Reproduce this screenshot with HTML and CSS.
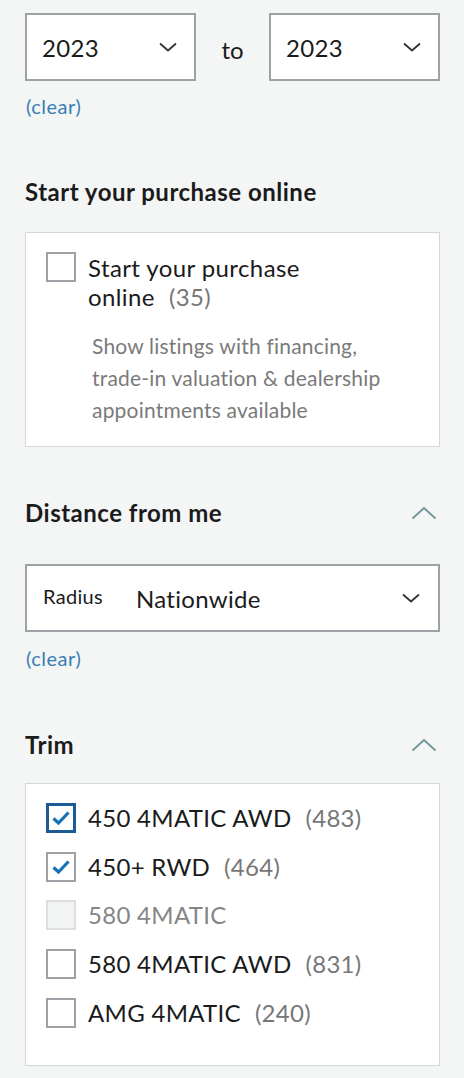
FILE: index.html
```html
<!DOCTYPE html>
<html>
<head>
<meta charset="utf-8">
<link rel="stylesheet" href="styles.css">
</head>
<body>
<div class="panel">
  <div class="year-row">
    <div class="select year">
      <span class="value">2023</span>
      <svg class="chev" width="18" height="10" viewBox="0 0 18 10"><path d="M1 1.5 L9 8.5 L17 1.5" fill="none" stroke="#333" stroke-width="1.8"/></svg>
    </div>
    <span class="to">to</span>
    <div class="select year">
      <span class="value">2023</span>
      <svg class="chev" width="18" height="10" viewBox="0 0 18 10"><path d="M1 1.5 L9 8.5 L17 1.5" fill="none" stroke="#333" stroke-width="1.8"/></svg>
    </div>
  </div>
  <a class="clear clear-first">(clear)</a>

  <h2 class="heading h-purchase">Start your purchase online</h2>
  <div class="card card-purchase">
    <div class="check-row">
      <span class="box"></span>
      <div class="label">
        <div class="line">Start your purchase</div>
        <div class="line">online<span class="count">(35)</span></div>
      </div>
    </div>
    <p class="desc">Show listings with financing, trade-in valuation &amp; dealership appointments available</p>
  </div>

  <div class="heading-row h-distance">
    <h2 class="heading">Distance from me</h2>
    <svg class="up" width="26" height="14" viewBox="0 0 26 14"><path d="M1.5 12.5 L13 2 L24.5 12.5" fill="none" stroke="#6e969b" stroke-width="1.8"/></svg>
  </div>
  <div class="select radius">
    <span class="radius-label">Radius</span>
    <span class="value nation">Nationwide</span>
    <svg class="chev" width="18" height="10" viewBox="0 0 18 10"><path d="M1 1.5 L9 8.5 L17 1.5" fill="none" stroke="#333" stroke-width="1.8"/></svg>
  </div>
  <a class="clear clear-second">(clear)</a>

  <div class="heading-row h-trim">
    <h2 class="heading">Trim</h2>
    <svg class="up" width="26" height="14" viewBox="0 0 26 14"><path d="M1.5 12.5 L13 2 L24.5 12.5" fill="none" stroke="#6e969b" stroke-width="1.8"/></svg>
  </div>
  <div class="card card-trim">
    <div class="trim-row">
      <span class="box checked strong"><svg width="20" height="16" viewBox="0 0 20 16"><path d="M2.5 8.5 L7.5 13 L17.5 2.5" fill="none" stroke="#1672b5" stroke-width="3.2"/></svg></span>
      <span class="label">450 4MATIC AWD<span class="count">(483)</span></span>
    </div>
    <div class="trim-row">
      <span class="box checked"><svg width="20" height="16" viewBox="0 0 20 16"><path d="M2.5 8.5 L7.5 13 L17.5 2.5" fill="none" stroke="#1672b5" stroke-width="3.2"/></svg></span>
      <span class="label">450+ RWD<span class="count">(464)</span></span>
    </div>
    <div class="trim-row disabled">
      <span class="box"></span>
      <span class="label">580 4MATIC</span>
    </div>
    <div class="trim-row">
      <span class="box"></span>
      <span class="label">580 4MATIC AWD<span class="count">(831)</span></span>
    </div>
    <div class="trim-row">
      <span class="box"></span>
      <span class="label">AMG 4MATIC<span class="count">(240)</span></span>
    </div>
  </div>
</div>
</body>
</html>
```
FILE: styles.css
```css
html, body {
  margin: 0;
  padding: 0;
  background: #f4f5f5;
}
body {
  font-family: Lato, "Noto Sans", sans-serif;
  color: #1b1b1b;
}
.panel {
  padding: 13px 24px 0 25px;
  display: flex;
  flex-direction: column;
}
.year-row {
  display: flex;
  align-items: center;
  height: 68px;
}
.select {
  box-sizing: border-box;
  height: 68px;
  background: #fff;
  border: 2px solid #9ea2a7;
  display: flex;
  align-items: center;
}
.year {
  width: 171px;
  padding: 0 17px 0 15px;
  justify-content: space-between;
}
.value {
  font-size: 24px;
  letter-spacing: 0.3px;
  color: #1b1b1b;
}
.to {
  flex: 1;
  text-align: center;
  font-size: 24px;
  padding-top: 4px;
}
.clear {
  display: block;
  font-size: 20px;
  letter-spacing: 0.5px;
  line-height: 24px;
  color: #3a7db3;
  margin-left: 1px;
}
.clear-first { margin-top: 13px; }
.clear-second { margin-top: 14px; }
.heading {
  margin: 0;
  font-size: 24px;
  font-weight: 700;
  letter-spacing: 0.5px;
  line-height: 28px;
  color: #1b1b1b;
}
.h-purchase { margin-top: 60px; }
.heading-row {
  display: flex;
  align-items: center;
  justify-content: space-between;
  padding-right: 3px;
}
.h-distance { margin-top: 52px; }
.h-trim { margin-top: 61px; }
.card {
  box-sizing: border-box;
  background: #fff;
  border: 1.5px solid #d3d7db;
}
.card-purchase {
  margin-top: 26px;
  height: 215px;
  padding: 19px 20px 0 20px;
}
.check-row {
  display: flex;
  align-items: flex-start;
  gap: 12px;
}
.box {
  flex: none;
  box-sizing: border-box;
  width: 30px;
  height: 30px;
  border: 2px solid #9ea2a7;
  background: #fff;
  display: flex;
  align-items: center;
  justify-content: center;
}
.box.strong {
  border: 3px solid #1a5c93;
}
.check-row .label {
  font-size: 24px;
  letter-spacing: 0.4px;
  line-height: 29px;
  margin-top: 1px;
}
.count {
  color: #777;
  margin-left: 14px;
}
.desc {
  margin: 19px 0 0 46px;
  width: 315px;
  font-size: 21px;
  letter-spacing: 0.2px;
  line-height: 32px;
  color: #7a7a7a;
}
.radius {
  margin-top: 37px;
  width: 100%;
  padding: 0 18px 0 16px;
}
.radius-label {
  font-size: 20px;
  letter-spacing: 0.3px;
  width: 93px;
  padding-bottom: 4px;
}
.nation {
  flex: 1;
}
.card-trim {
  margin-top: 24px;
  height: 283px;
  padding: 19px 20px 0 20px;
  display: flex;
  flex-direction: column;
  gap: 18.7px;
}
.trim-row {
  display: flex;
  align-items: center;
  gap: 12px;
  height: 30px;
}
.trim-row .label {
  font-size: 24px;
  letter-spacing: 0.3px;
  line-height: 30px;
}
.trim-row.disabled .box {
  background: #f2f3f3;
  border-color: #dcdfe1;
}
.trim-row.disabled .label {
  color: #868686;
}
```
